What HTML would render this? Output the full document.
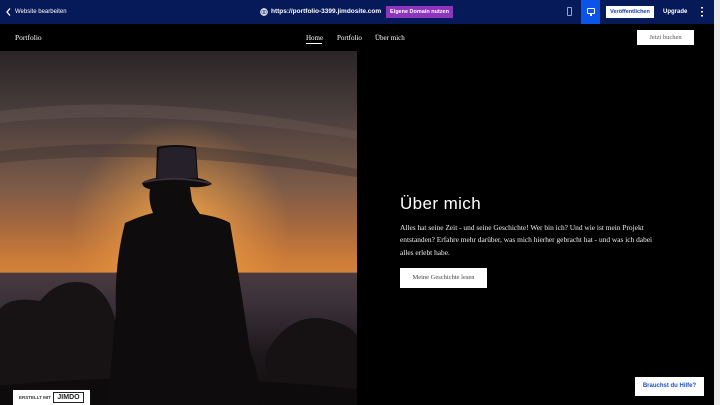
<!DOCTYPE html>
<html><head><meta charset="utf-8"><style>
*{margin:0;padding:0;box-sizing:border-box}
body{width:720px;height:405px;overflow:hidden;background:#000;position:relative;font-family:"Liberation Sans",sans-serif}
.top{position:absolute;left:0;top:0;width:714px;height:24px;background:#061a5a;color:#fff}
.sb{position:absolute;right:0;top:0;width:6px;height:405px;background:#ececec}
.t{position:absolute;font-size:6px;font-weight:bold;white-space:nowrap}
.serif{font-family:"Liberation Serif",serif}
</style></head><body>
<div class="top">
  <svg style="position:absolute;left:6px;top:8px" width="5" height="8"><path d="M4 0.5 L1 4 L4 7.5" stroke="#fff" stroke-width="1.3" fill="none"/></svg>
  <div class="t" style="left:15px;top:9px;font-weight:normal">Website bearbeiten</div>
  <svg style="position:absolute;left:260px;top:8px" width="8" height="8"><circle cx="4" cy="4" r="3.3" stroke="#fff" fill="none" stroke-width="1"/><path d="M0.7 4H7.3M4 0.7C2 3 2 5 4 7.3M4 0.7C6 3 6 5 4 7.3" stroke="#fff" fill="none" stroke-width=".8"/></svg>
  <div class="t" style="left:271px;top:8px;font-size:6.5px">https://portfolio-3399.jimdosite.com</div>
  <div style="position:absolute;left:386px;top:6px;width:67px;height:12px;background:#8e35c0;color:#fff;font-size:5.5px;font-weight:bold;text-align:center;line-height:12px">Eigene Domain nutzen</div>
  <div style="position:absolute;left:567px;top:7px;width:5px;height:9px;border:1px solid #9aa3c0;border-radius:1px"></div>
  <div style="position:absolute;left:581px;top:0;width:19px;height:24px;background:#0a54ea"></div>
  <div style="position:absolute;left:587px;top:8px;width:8px;height:6px;border:1.3px solid #fff;border-radius:1px"></div>
  <div style="position:absolute;left:590px;top:14px;width:2px;height:2px;background:#fff"></div>
  <div style="position:absolute;left:606px;top:6px;width:48px;height:12px;background:#fff;color:#1a3aa8;font-size:5.5px;font-weight:bold;text-align:center;line-height:12px">Veröffentlichen</div>
  <div class="t" style="left:663px;top:9px">Upgrade</div>
  <div style="position:absolute;left:701px;top:7px;width:1.5px;height:10px;background:repeating-linear-gradient(#fff 0 1.5px,transparent 1.5px 4px)"></div>
</div>
<div class="serif" style="position:absolute;left:15px;top:33px;color:#fff;font-size:7.5px">Portfolio</div>
<div class="serif" style="position:absolute;left:306px;top:34px;color:#fff;font-size:7px">Home</div>
<div style="position:absolute;left:306px;top:43px;width:16px;height:1px;background:#fff"></div>
<div class="serif" style="position:absolute;left:337px;top:34px;color:#fff;font-size:7px">Portfolio</div>
<div class="serif" style="position:absolute;left:375px;top:34px;color:#fff;font-size:7px">Über mich</div>
<div class="serif" style="position:absolute;left:637px;top:30px;width:57px;height:15px;background:#fff;color:#555;font-size:6.5px;text-align:center;line-height:15px">Jetzt buchen</div>

<svg style="position:absolute;left:0;top:51px" width="357" height="354" viewBox="0 0 357 354">
<defs>
<linearGradient id="sky" x1="0" y1="0" x2="0" y2="1">
<stop offset="0" stop-color="#2a2528"/><stop offset=".2" stop-color="#4e413e"/><stop offset=".38" stop-color="#7a5a48"/><stop offset=".5" stop-color="#a8693e"/><stop offset=".58" stop-color="#c87a38"/><stop offset=".625" stop-color="#d4823a"/><stop offset=".627" stop-color="#4a3a40"/><stop offset=".72" stop-color="#3a3038"/><stop offset=".85" stop-color="#1e191c"/><stop offset="1" stop-color="#0e0c0d"/>
</linearGradient>
<radialGradient id="glow" cx="180" cy="180" r="110" gradientUnits="userSpaceOnUse"><stop offset="0" stop-color="#ffb448" stop-opacity=".85"/><stop offset="1" stop-color="#ffa040" stop-opacity="0"/></radialGradient>
</defs>
<rect width="357" height="354" fill="url(#sky)"/>
<rect width="357" height="221" fill="url(#glow)"/>
<path d="M0 60 Q150 40 357 80 L357 88 Q150 55 0 72Z" fill="#6b5a55" opacity=".4"/>
<path d="M0 100 Q170 80 357 118 L357 126 Q150 95 0 112Z" fill="#3e3234" opacity=".45"/>
<path d="M0 258 Q10 245 40 250 Q60 225 90 233 Q115 245 118 290 L118 354 L0 354Z" fill="#171314"/>
<path d="M265 305 Q285 265 320 267 Q350 272 357 285 L357 354 L265 354Z" fill="#161213"/>
<path d="M0 335 Q150 318 357 338 L357 354 L0 354Z" fill="#0d0b0c"/>
<path d="M157 96 Q175 92 196 96 L198 127 Q208 129 212 133 Q205 137 190 136 L192 150 Q196 158 200 163 Q220 166 230 172 Q240 230 250 300 Q262 330 258 354 L108 354 Q112 300 116 260 Q114 215 125 172 Q140 165 153 162 Q148 150 150 138 Q143 137 142 132 Q148 128 156 127Z" fill="#0f0c0d"/>
<path d="M159 98 Q175 94 195 98 L197 127 L157 127Z" fill="#25202a"/>
<path d="M144 131 Q175 124 210 132" stroke="#3a3038" stroke-width="2" fill="none"/>
</svg>
<div style="position:absolute;left:13px;top:390px;width:77px;height:15px;background:#fff"></div>
<div class="t" style="left:19px;top:395px;font-size:4.5px;color:#333">ERSTELLT MIT</div>
<div style="position:absolute;left:53px;top:392px;width:31px;height:11px;border:1px solid #222;font-size:7px;font-weight:bold;text-align:center;line-height:9px;color:#222">JIMDO</div>

<div style="position:absolute;left:400px;top:194px;color:#fff;font-size:17px;letter-spacing:.4px">Über mich</div>
<div class="serif" style="position:absolute;left:400px;top:222px;width:258px;color:#eee;font-size:7.4px;line-height:12.3px">Alles hat seine Zeit - und seine Geschichte! Wer bin ich? Und wie ist mein Projekt entstanden? Erfahre mehr darüber, was mich hierher gebracht hat - und was ich dabei alles erlebt habe.</div>
<div class="serif" style="position:absolute;left:400px;top:268px;width:87px;height:20px;background:#fff;color:#444;font-size:6.5px;text-align:center;line-height:20px">Meine Geschichte lesen</div>

<div style="position:absolute;left:635px;top:377px;width:69px;height:19px;background:#fff;color:#1a50d0;font-size:6px;font-weight:bold;text-align:center;line-height:19px">Brauchst du Hilfe?</div>
<div class="sb"></div>
</body></html>
